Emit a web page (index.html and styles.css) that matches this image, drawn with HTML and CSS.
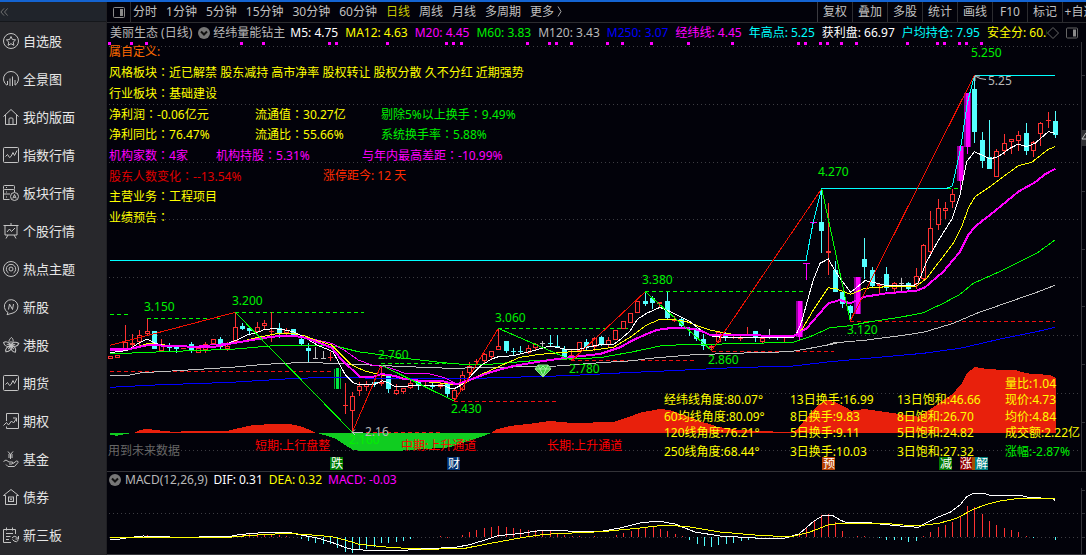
FILE: index.html
```html
<!DOCTYPE html>
<html lang="zh-CN">
<head>
<meta charset="utf-8">
<title>美丽生态 日线</title>
<link rel="stylesheet" href="styles.css">
</head>
<body>
<div class="app">
<nav class="side">
  <div class="side-head"><button class="fold" aria-label="收起"><svg viewBox="0 0 10 10"><path d="M4.500 1 1 5l3.500 4M8.500 1 5 5l3.500 4"/></svg></button></div>
  <a href="#zx"><svg viewBox="0 0 16 16"><circle cx="8" cy="8" r="7.500"/><path d="m8 3.500 1.400 3 3.200.4-2.400 2.200.7 3.200L8 10.700l-2.900 1.600.7-3.200-2.400-2.200 3.200-.4z"/></svg>自选股</a>
  <a href="#qj"><svg viewBox="0 0 16 16"><path d="M4 14.300A7.500 7.500 0 1 1 12 14.300M4.500 14v-4M7 15V7.500M9.500 15V5.500M12 14V9"/></svg>全景图</a>
  <a href="#bm"><svg viewBox="0 0 16 16"><path d="m.5 7.500 7.500-7 7.500 7M2.500 6v9.500h11V6M6 15.500V10q0-1 1-1h2q1 0 1 1v5.500"/></svg>我的版面</a>
  <a href="#zs"><svg viewBox="0 0 16 16"><rect x=".5" y=".5" width="15" height="15" rx="1"/><path d="m2.500 9.500 2-2 2 3 1.500-1 2-4 1.500 3 2.500-5"/></svg>指数行情</a>
  <a href="#bk"><svg viewBox="0 0 16 16"><rect x=".5" y=".5" width="11" height="4" rx="1"/><path d="M11.500 4.500V7M.5 4.500v10h6M.5 9h6.500M3 2.500h1M3 7h1M3 12h1"/><circle cx="11.500" cy="11.500" r="4"/><path d="m9.800 13.500 1.700-4 1.700 4M10.500 12.300h2"/></svg>板块行情</a>
  <a href="#gg"><svg viewBox="0 0 16 16"><path d="M.5 2.500h15M2 2.500v9.500h12V2.500M8 0v2.500M5 12l-2 3.500M11 12l2 3.500M4 9l2.500-3 2 2.500L12 5"/></svg>个股行情</a>
  <a href="#rd"><svg viewBox="0 0 16 16"><circle cx="8" cy="8" r="7.500"/><path d="M5.500 12a4.700 4.700 0 1 1 5 0"/><circle cx="8" cy="8" r="2"/></svg>热点主题</a>
  <a href="#xg"><svg viewBox="0 0 16 16"><path d="M5 13.500A6.800 6.800 0 1 1 10 14L4 15.700z"/><path d="M5.500 10.500 6.500 5l3 5.500L10.500 5"/></svg>新股</a>
  <a href="#gp"><svg viewBox="0 0 16 16"><g id="petal"><path d="M8 8.500C5 6 5.500 2.500 8.500.5c2.500 2 2 5-.5 8zM8 8V4"/></g><use href="#petal" transform="rotate(72 8 8.500)"/><use href="#petal" transform="rotate(144 8 8.500)"/><use href="#petal" transform="rotate(216 8 8.500)"/><use href="#petal" transform="rotate(288 8 8.500)"/></svg>港股</a>
  <a href="#qh"><svg viewBox="0 0 16 16"><rect x=".5" y=".5" width="15" height="15" rx="1"/><path d="m2.500 9.500 2-2 2 3 1.500-1 2-4 1.500 3 2.500-5"/></svg>期货</a>
  <a href="#qq"><svg viewBox="0 0 16 16"><path d="M3.500 8V.5h12v15h-12v-2M.5 12.500l3-3 2 2.500 3-4 2 2 3-4.500M10 5h3.500v3.500"/></svg>期权</a>
  <a href="#jj"><svg viewBox="0 0 16 16"><path d="m5 .5 2.500 3 2.500-3M7.500 3.500V8M5 4h5M5 6h5M.5 10.500 3 9l3 2h3.500q1 1.500-.5 2H6M10 12.500l3.500-2.500q2 0 1.500 1.500l-3.500 4H5l-2-2"/></svg>基金</a>
  <a href="#zq"><svg viewBox="0 0 16 16"><path d="m.5 6.500 7.500-6 7.500 6H13.500v9h-11v-9H.5M5 8h6M5 12.500h6M5.500 8v4.500M10.500 8v4.500M7 9.300l2 2M9 9.300l-2 2"/></svg>债券</a>
  <a href="#xs"><svg viewBox="0 0 16 16"><path d="M8 15.500H.5v-13h12V7M3.500.5v3M9.500.5v3M3 6.500h7M3 9.500h4.500M3 12.500h3M9 11q2-3 4.500-1l1.500 1.500M15.500 9v3h-3M15.500 13q-2 3-4.500 1L9.500 12.500"/></svg>新三板</a>
</nav>
<main class="main">
  <header class="bar">
    <button class="split" aria-label="侧栏"><svg viewBox="0 0 12 11"><rect x=".5" y=".5" width="11" height="10" rx="1"/><path class="solid" d="M7 2h3v7H7z"/></svg></button>
    <div class="periods">
      <button>分时</button><button>1分钟</button><button>5分钟</button><button>15分钟</button><button>30分钟</button><button>60分钟</button><button class="on">日线</button><button>周线</button><button>月线</button><button>多周期</button><button>更多 <svg class="more" viewBox="0 0 5 11"><path d="m1 .5 3 5-3 5"/></svg></button>
    </div>
    <div class="tools"><button>复权</button><button>叠加</button><button>多股</button><button>统计</button><button>画线</button><button>F10</button><button>标记</button><button>+自选</button></div>
  </header>
  <div class="quote">
    <span class="gray">美丽生态 (日线)</span>
    <button class="drop" aria-label="指标"><svg viewBox="0 0 12 12"><circle cx="6" cy="6" r="6"/><path d="m3 4.500 3 3 3-3"/></svg></button>
    <span class="gray title">经纬量能钻主</span>
    <div class="values"><span class="white">M5: 4.75</span><span class="yellow">MA12: 4.63</span><span class="magenta">M20: 4.45</span><span class="green">M60: 3.83</span><span class="gray">M120: 3.43</span><span class="blue">M250: 3.07</span><span class="magenta">经纬线: 4.45</span><span class="cyan">年高点: 5.25</span><span class="white">获利盘: 66.97</span><span class="cyan">户均持仓: 7.95</span><span class="yellow">安全分: 60.00</span></div>
    <button class="mark" aria-label="标记"><svg viewBox="0 0 12 12"><path d="m6 .5 5.500 5.500L6 11.500.5 6z"/></svg></button>
    <button class="mark side-toggle" aria-label="右栏"><svg viewBox="0 0 12 11"><rect x=".5" y=".5" width="11" height="10" rx="1"/><path class="solid" d="M7 2h3v7H7z"/></svg></button>
  </div>
  <section class="price">
    <svg id="price" class="plot" viewBox="107 42 979 429">
      <g id="price-shapes"></g>
      <path class="axis" d="M1081.500 42V471M1082 75.500h3M1082 191.500h3M1082 249.500h3M1082 306.500h3M1082 364.500h3M1082 422.500h3"/>
      <path class="axis-box" d="M1082 130h4v16h-4z"/>
      <path class="pointer" d="M1086 133l-4 6h4"/>
      <path class="pointer" d="M986 79.500l-6-1-5-2.500v5M975 76h5M363 432.500h-11l3-3M352 432l3 3"/>
      <path class="gem" d="M538 365h10l3 4-8 8-8-8z"/>
      <path class="gem-cut" d="M535 369h16M540 369l3 7 3-7-3-3zM538 365l2 4M548 365l-2 4"/>
      <g class="label green">
        <text x="144" y="311">3.150</text><text x="232" y="305">3.200</text><text x="378" y="359">2.760</text><text x="349" y="444">2.160</text><text x="451" y="413">2.430</text><text x="495" y="322">3.060</text><text x="569" y="373">2.780</text><text x="642" y="284">3.380</text><text x="708" y="364">2.860</text><text x="847" y="334">3.120</text><text x="818" y="176">4.270</text><text x="971" y="57">5.250</text>
      </g>
      <g class="label gray"><text x="365" y="436">2.16</text><text x="988" y="85">5.25</text></g>
      <g class="label red"><text x="255" y="450">短期:上行盘整</text><text x="401" y="450">中期:上升通道</text><text x="547" y="450">长期:上升通道</text></g>
      <text class="label dim" x="108" y="455">用到未来数据</text>
      <g class="label yellow">
        <text x="664" y="404">经纬线角度:80.07°</text><text x="664" y="421">60均线角度:80.09°</text><text x="664" y="437">120线角度:76.21°</text><text x="664" y="456">250线角度:68.44°</text>
        <text x="790" y="404">13日换手:16.99</text><text x="790" y="421">8日换手:9.83</text><text x="790" y="437">5日换手:9.11</text><text x="790" y="456">3日换手:10.03</text>
        <text x="897" y="404">13日饱和:46.66</text><text x="897" y="421">8日饱和:26.70</text><text x="897" y="437">5日饱和:24.82</text><text x="897" y="456">3日饱和:27.32</text>
        <text x="1005" y="388">量比:1.04</text><text x="1005" y="404">现价:4.73</text><text x="1005" y="421">均价:4.84</text><text x="1005" y="437">成交额:2.22亿</text><text class="green" x="1005" y="456">涨幅:-2.87%</text>
      </g>
      <path fill="#007a00" d="M330 457h13v13h-13zM939 457h13v13h-13z"/><path fill="#003070" d="M447 457h13v13h-13z"/><path fill="#b84000" d="M822 457h13v13h-13z"/><path fill="#a05000" d="M971 457h5v13h-5z"/><path fill="#900000" d="M960 457h12v13h-12z"/><path fill="#008080" d="M975 457h13v13h-13z"/>
      <g class="label white"><text x="331" y="468">跌</text><text x="448" y="468">财</text><text x="823" y="468">预</text><text x="940" y="468">减</text><text x="960" y="468">涨</text><text x="976" y="468">解</text></g>
    </svg>
    <div class="facts">
      <p class="orange">属自定义:</p>
      <p class="yellow">风格板块<i>：</i>近已解禁 股东减持 高市净率 股权转让 股权分散 久不分红 近期强势</p>
      <p class="yellow">行业板块<i>：</i>基础建设</p>
      <p class="yellow cols"><span>净利润<i>：</i>-0.06亿元</span><span>流通值<i>：</i>30.27亿</span><span class="green">剔除5%以上换手<i>：</i>9.49%</span></p>
      <p class="yellow cols"><span>净利同比<i>：</i>76.47%</span><span>流通比<i>：</i>55.66%</span><span class="green">系统换手率<i>：</i>5.88%</span></p>
      <p class="magenta cols holders"><span>机构家数<i>：</i>4家</span><span>机构持股<i>：</i>5.31%</span><span>与年内最高差距<i>：</i>-10.99%</span></p>
      <p class="darkred cols change"><span>股东人数变化<i>：</i>--13.54%</span><span class="limit">涨停距今: 12 天</span></p>
      <p class="yellow">主营业务<i>：</i>工程项目</p>
      <p class="yellow">业绩预告<i>：</i></p>
    </div>
  </section>
  <section class="macd">
    <div class="macd-head"><button class="drop" aria-label="指标"><svg viewBox="0 0 12 12"><circle cx="6" cy="6" r="6"/><path d="m3 4.500 3 3 3-3"/></svg></button><span class="gray">MACD(12,26,9)</span><span class="white">DIF: 0.31</span><span class="yellow">DEA: 0.32</span><span class="magenta">MACD: -0.03</span></div>
    <svg id="macd" class="plot" viewBox="107 488 979 66"><g id="macd-shapes"></g><path class="axis" d="M1081.500 488v66M1082 490.500h3M1082 513.500h3M1082 537.500h3"/></svg>
  </section>
</main>
</div>
<script src="chart.js"></script>
</body>
</html>
```
FILE: styles.css
```css
* { box-sizing: border-box; }
body { margin: 0; background: #02020a; color: #c0c0c0; font: 12px/16px "Noto Sans", "Noto Sans CJK SC", sans-serif; overflow: hidden; }
button { margin: 0; padding: 0; border: 0; background: none; color: inherit; font: inherit; white-space: nowrap; }
svg { display: block; }
p { margin: 0; }
.app { display: flex; min-height: 100vh; border-top: 2px solid #1464d2; }
.side { flex: 0 0 107px; background: #28282c; border-right: 1px solid #202024; overflow: hidden; }
.side-head { height: 20px; background: #20242b; border-bottom: 1px solid #15171b; display: flex; align-items: center; }
.fold svg { width: 9px; height: 10px; fill: none; stroke: #777; }
.side a { display: flex; align-items: center; gap: 4px; height: 38px; padding-left: 3px; color: #e6e6e6; text-decoration: none; font-size: 13px; }
.side a svg { width: 16px; height: 16px; fill: none; stroke: #c4c4c4; overflow: visible; }
.main { flex: 1; min-width: 0; display: flex; flex-direction: column; }
.bar { display: flex; height: 21px; border-bottom: 1px solid #2c2c30; align-items: stretch; overflow: hidden; }
.split { width: 24px; display: flex; align-items: center; justify-content: center; border-right: 1px solid #2c2c30; }
.split svg, .side-toggle svg { width: 12px; height: 11px; fill: none; stroke: #8a8a8a; }
svg .solid { fill: #8a8a8a; stroke: none; }
.periods { flex: 1; display: flex; gap: 9px; padding-left: 2px; min-width: 0; overflow: hidden; }
.periods .on { color: #c8c800; }
.more { display: inline-block; width: 5px; height: 11px; vertical-align: -1px; fill: none; stroke: #aaa; }
.tools { display: flex; border-left: 1px solid #3a3a40; width: 269px; overflow: hidden; }
.tools button { flex: 0 0 35px; border-right: 1px solid #2c2c30; }
.quote { display: flex; align-items: center; height: 19px; padding-left: 3px; }
.quote > span { white-space: nowrap; }
.drop svg { width: 12px; height: 12px; fill: #777; }
.drop path { fill: none; stroke: #111; stroke-width: 2; }
.quote .drop { margin: 0 3px 0 6px; }
.values { flex: 1; min-width: 0; display: flex; gap: 7px; margin-left: 5px; overflow: hidden; white-space: nowrap; }
.values span { flex: none; }
.mark svg { width: 12px; height: 12px; fill: none; stroke: #666; }
.side-toggle { margin: 0 8px 0 7px; }
.price { position: relative; border-bottom: 1px solid #333338; }
.plot { width: 100%; height: auto; overflow: hidden; }
.facts { position: absolute; top: 0; left: 2px; height: 186px; display: grid; grid-auto-rows: 1fr; align-items: center; white-space: nowrap; }
.facts i { font-family: "Noto Sans CJK TC", sans-serif; font-style: normal; font-feature-settings: "locl" 0; }
.cols { display: grid; grid-template-columns: 146px 126px auto; }
.holders { grid-template-columns: 107px 146px auto; }
.change { grid-template-columns: 214px auto; }
.macd { border-bottom: 1px solid #333338; }
.macd-head { display: flex; align-items: center; gap: 6px; height: 16px; padding-left: 2px; }
.macd-head .drop + span { margin-left: -2px; }
.gray { color: #b8b8b8; fill: #b8b8b8; }
.white { color: #fff; fill: #fff; }
.yellow { color: #ff0; fill: #ff0; }
.magenta { color: #f0f; fill: #f0f; }
.green { color: #00f000; fill: #00f000; }
.blue { color: #00f; fill: #00f; }
.cyan { color: #0ff; fill: #0ff; }
.red { fill: #f00; }
.orange { color: #ff6a00; }
.darkred { color: #e00000; }
.limit { color: #ff2a00; }
.dim { fill: #666; }
.axis, .grid { fill: none; stroke: #34343a; shape-rendering: crispEdges; }
.grid { stroke: #3c3c42; stroke-dasharray: 1 3; }
.axis-box { fill: #303034; }
.pointer { fill: none; stroke: #c0c0c0; }
.gem { fill: #3ed13e; stroke: #8fe08f; }
.gem-cut { fill: none; stroke: #a8eca8; }
.line { fill: none; shape-rendering: crispEdges; }
.crisp { shape-rendering: crispEdges; }
```
FILE: chart.js
```js
const NS = 'http://www.w3.org/2000/svg';

// Each pane stores its points in thirds of a unit from its own origin.
const pane = { A: [105, 280], B: [400, 260], C: [650, 220], D: [790, 40], E: [840, 340], F: [105, 465], P: null };

function points(data) {
  const out = [];
  let origin = null;
  for (const token of data.trim().split(/\s+/)) {
    if (token in pane) { origin = pane[token]; continue; }
    const [x, y] = token.split(',').map(Number);
    out.push(origin ? [origin[0] + x / 3, origin[1] + y / 3] : [x, y]);
  }
  return out;
}

function add(parent, name, attrs) {
  const node = document.createElementNS(NS, name);
  for (const key in attrs) node.setAttribute(key, attrs[key]);
  parent.appendChild(node);
}

const toPath = list => 'M' + list.map(p => p.map(n => n.toFixed(1)).join(' ')).join('L');
function line(parent, color, data, width = 1, dash = 'none') {
  add(parent, 'path', { class: 'line', d: toPath(points(data)), stroke: color, 'stroke-width': width, 'stroke-dasharray': dash });
}
function area(parent, color, data) {
  add(parent, 'path', { class: 'crisp', d: toPath(points(data)) + 'Z', fill: color });
}
function box(parent, color, x, y, w, h) {
  add(parent, 'rect', { class: 'crisp', x, y, width: w, height: h, fill: color });
}

const price = document.getElementById('price-shapes');
for (const y of [46, 104, 162, 219, 277, 335, 393, 450]) add(price, 'path', { class: 'grid', d: `M109 ${y + 0.5}H1081` });

const marks = [109, 131, 146, 241, 263, 329, 336, 387, 446, 453, 461, 527, 549, 556, 571, 607, 622, 651, 688, 732, 798, 805, 820, 827, 841, 856, 907, 937, 944, 959, 966, 981];
for (const x of marks) box(price, '#f0f', x - 1, 42, 3, 3);

const red = '#e8200c', green = '#10cc20';
area(price, red, 'A 88,458 105,450 127,446 150,450 200,455 300,453 370,452 400,445 440,436 500,432 555,432 590,440 620,452 632,458');
area(price, green, 'A 15,458 15,465 35,467 60,462 88,458');
area(price, green, 'A 632,458 660,466 690,475 720,495 745,510 780,514 880,514 B 0,572 60,568 150,562 200,545 250,528 275,518');
area(price, red, 'B 275,518 290,508 330,498 400,490 450,483 520,489 640,486 690,470 720,458 780,447 810,450 850,465 880,475 910,487 C 180,612 200,620 270,630 420,637 440,630 460,605 490,570 510,550 530,540 560,548 605,572 E 75,207 150,218 235,230 270,208 340,160 365,130 380,100 405,81 445,88 525,90 560,100 630,105 648,115 648,278');

const dashed = [
  ['#0f0', 'A 15,103 78,103'], ['#0f0', 'A 127,115 345,115'], ['#0f0', 'A 391,97 778,97'],
  ['#0f0', 'A 829,250 895,250'], ['#0f0', 'B 0,310 150,310'], ['#0f0', 'B 295,205 690,205'],
  ['#0f0', 'B 736,94 C 462,214'], ['#0f0', 'D 470,446 511,446'],
  ['#f01010', 'A 15,274 690,274'], ['#f01010', 'A 742,457 B 120,517'], ['#f01010', 'B 163,424 470,424'],
  ['#f01010', 'B 514,301 885,301'], ['#f01010', 'C 185,394 552,394'], ['#f01010', 'D 181,844 795,844']
];
for (const [color, data] of dashed) {
  const list = points(data).map(([x, y]) => [x, Math.floor(y) + 0.5]);
  line(price, color, 'P ' + list.map(p => p.join(',')).join(' '), 1, '4 3');
}

// type, centre, high, low, body top, body bottom
const candles = {
  A: `r16,228,236,228,236 r38,225,234,225,234 r61,135,213,187,213 r82,163,205,190,194 r103,150,198,165,185 r127,116,166,154,163
    c148,153,207,153,207 r169,177,215,195,212 c193,190,215,198,203 c214,195,220,198,206 r236,203,208,203,208 c259,187,218,192,212
    r280,203,220,203,220 r301,187,218,193,211 r325,176,192,176,192 c346,172,207,178,200 r367,187,213,197,206 r391,100,190,142,187
    c412,130,150,138,146 c433,142,165,145,152 r457,126,160,142,157 r478,120,150,130,138 r499,97,185,152,154 c523,130,175,145,160
    r544,145,170,150,160 c565,146,172,148,165 c589,168,195,177,192 c610,190,247,204,213 g631,200,235,234,235 g655,213,238,234,235
    r676,217,242,230,234 r721,310,402,375,376 r742,335,460,348,392 r764,305,348,317,332 r785,303,333,313,321 c808,300,322,307,312
    r829,255,318,305,312 c850,283,338,288,327 r873,313,345,331,342`,
  B: `r10,383,403,385,395 r31,362,387,370,385 c55,360,390,364,378 r77,365,380,376,377 c98,370,388,378,379 r120,365,388,372,380
    c142,365,412,370,402 r163,388,420,391,416 r187,333,393,346,391 r208,307,345,318,338 r230,297,312,303,306 r253,280,315,283,303
    r274,273,298,273,290 r295,205,270,259,269 c319,242,280,243,272 c340,265,288,274,275 c361,258,283,274,275 r385,255,283,264,279
    r406,248,272,251,263 g427,243,262,250,251 c451,224,258,250,251 c472,225,265,258,263 c493,258,297,267,290 r514,267,300,286,298
    r538,247,275,247,272 c559,237,270,246,262 r583,232,272,235,262 c604,228,258,230,254 r625,230,260,240,255 r647,210,240,210,240
    r670,184,207,184,207 r691,160,188,160,188 r712,124,158,124,158 c736,97,137,123,132 c757,108,147,114,130 r778,125,143,125,133
    c802,97,180,123,173 r823,167,187,180,181 c844,173,203,177,198 c868,200,228,208,209 c889,203,243,210,236 c910,222,270,236,258`,
  C: `r183,372,392,378,385 r205,335,370,337,367 c226,335,363,340,350 r250,347,358,352,353 r271,345,363,350,358 r292,320,345,343,344
    c316,333,365,334,355 r337,350,370,355,365 g358,327,357,347,348 c382,345,360,350,354 r403,345,367,352,353 r425,345,355,350,351
    m448,243,363,243,352 t469,130,180,130,131 t490,0,12,7,8`,
  D: `c95,447,640,547,572 r115,490,705,634,640 c137,663,755,691,755 c157,752,803,755,793 c181,795,840,797,820 m202,711,822,711,822
    c223,594,717,657,680 c247,680,742,690,737 r268,730,760,732,738 c289,680,752,702,745 r313,727,757,730,746 g334,713,755,730,731
    c355,725,750,729,748 r379,685,748,709,733 r400,612,722,616,718 r421,514,645,565,637 r445,477,570,505,556 r466,487,536,505,514
    r487,448,503,463,485 m511,319,450,319,422 m532,160,342,160,320 c553,110,308,147,275 c577,277,383,300,362 c598,240,386,350,386
    r619,328,410,332,410 r643,282,346,310,334 r664,297,342,298,307 r685,273,333,286,302 c709,249,346,279,332 r730,303,350,305,332
    r751,245,317,250,281 r775,216,264,240,241 c796,213,293,244,284`
};
const ink = { r: '#ff3232', c: '#54ffff', g: '#c0c0c0', m: '#f0f', t: '#f0f' };
for (const key in candles) {
  for (const item of candles[key].trim().split(/\s+/)) {
    const type = item[0], color = ink[type];
    const [cx, high, low, top, bottom] = item.slice(1).split(',').map(Number);
    const x = Math.floor(pane[key][0] + cx / 3);
    const [h, l, t, b] = [high, low, top, bottom].map(v => Math.round(pane[key][1] + v / 3));
    if (type === 'm') {
      box(price, '#90009a', x - 3, t, 7, b - t);
      box(price, color, x - 1, t, 4, b - t);
      box(price, color, x, t, 1, l - t);
      continue;
    }
    box(price, color, x, h, 1, Math.max(1, l - h));
    const half = type === 't' ? 3 : 2;
    const height = Math.max(1, b - t);
    box(price, color, x - half, t, half * 2 + 1, height);
    if (type === 'r' && height > 2) box(price, '#02020a', x - 1, t + 1, 3, height - 2);
  }
}
box(price, '#00b030', 334, 369, 1, 20);
box(price, '#00e840', 336, 368, 3, 21);
box(price, '#00b030', 340, 369, 1, 20);

line(price, '#00f', 'A 15,322 150,315 380,307 540,297 660,292 900,296 B 200,356 290,353 500,347 700,337 C 0,455 250,443 430,438 540,425 D 200,958 400,940 510,925 640,895 740,875 795,862');
line(price, '#c0c0c0', 'A 15,286 70,286 110,278 200,273 380,262 480,253 600,247 750,253 880,259 B 150,325 300,322 470,318 600,308 700,302 C 0,415 120,405 250,400 420,395 480,385 560,370 D 120,910 230,900 330,887 400,877 490,850 560,820 680,778 740,757 795,736');
line(price, '#0f0', 'A 15,222 130,217 260,212 380,208 520,196 650,197 700,200 760,215 830,225 880,233 B 60,300 130,308 200,314 280,312 400,302 480,298 600,293 700,275 780,258 860,253 C 180,373 430,367 480,350 540,323 600,317 D 240,845 330,832 400,818 460,790 510,763 550,730 640,690 700,660 740,640 795,600');
line(price, '#f0f', 'A 15,205 80,205 130,194 260,200 370,190 530,167 590,170 680,190 720,212 760,240 800,255 850,262 900,280 B 80,340 130,352 170,371');
line(price, '#ff0', 'A 15,210 80,207 130,190 190,196 300,202 350,198 400,187 460,172 520,160 560,160 600,168 630,180 680,195 700,215 740,255 780,273 830,285 880,290 B 40,362 110,368 150,372 180,375 210,362 240,345 300,318 360,292 420,283 480,278 580,270 640,262 690,232 740,195 780,178 820,178 860,185 900,200 C 180,330 215,337 260,345 430,350 455,330 490,270 535,203 D 140,747 182,763 225,745 290,740 380,738 410,715 450,662 490,610 515,560 535,505 555,470 600,440 640,410 685,377 725,367 775,328 795,320');
line(price, '#fff', 'A 15,217 45,215 70,210 100,190 127,177 150,190 180,197 240,200 345,198 370,190 395,180 425,165 455,158 480,148 510,146 540,150 565,155 590,168 612,180 640,197 665,207 685,217 705,255 720,283 745,308 765,315 810,313 832,302 850,308 870,320 885,320 B 0,380 60,375 100,378 130,375 150,385 165,385 190,372 215,345 245,315 275,297 295,290 340,287 380,277 415,268 450,258 475,263 500,269 540,267 570,260 600,254 640,254 665,235 690,213 712,178 740,160 780,142 810,155 845,172 870,185 900,208 C 180,347 215,352 430,352 440,340 455,305 470,250 490,180 510,130 535,117 D 125,675 150,715 182,757 225,722 250,727 290,737 370,737 385,728 410,665 440,610 487,535 510,465 530,365 553,335 575,345 600,357 625,350 660,325 685,312 710,320 735,310 775,275 795,280');
line(price, '#f0f', 'A 15,210 70,208 130,195 260,200 330,200 370,192 430,182 480,173 530,167 590,170 620,180 680,203 710,240 765,290 800,292 830,282 870,288 885,293 B 0,355 60,362 120,362 170,373 200,363 270,337 340,318 430,303 500,293 600,282 660,262 700,240 740,222 770,210 820,203 880,206 910,215 C 180,345 270,345 430,349 470,325 500,290 535,250 D 150,780 180,790 225,770 290,760 380,752 405,742 460,695 510,635 535,585 555,560 610,517 685,455 735,427 765,403 796,386', 2);
line(price, '#0ff', 'P 110,260.5 806,260.5 D 70,545 95,445 470,445 487,438 511,330 532,190 553,107 795,107');

const swings = [
  ['r', 'A 15,196 391,97'], ['g', 'A 391,97 742,457'], ['r', 'A 742,457 829,255'], ['g', 'A 829,255 B 163,424'],
  ['r', 'B 163,424 295,205'], ['g', 'B 295,205 514,300'], ['r', 'B 517,300 736,95'], ['g', 'B 736,95 C 185,392'],
  ['r', 'C 185,392 D 95,446'], ['g', 'D 95,446 181,843'], ['r', 'D 181,843 553,106']
];
for (const [kind, data] of swings) line(price, kind === 'r' ? '#f01000' : '#00ff00', data);

const macd = document.getElementById('macd-shapes');
for (const y of [513, 537]) add(macd, 'path', { class: 'grid', d: `M109 ${y + 0.5}H1081` });

const bars = points('F 37,219 61,219 103,213 127,210 148,214 391,213 412,210 433,207 457,206 478,206 499,207 523,211 544,214 589,221 610,228 631,234 655,237 676,236 697,249 721,261 742,263 763,256 785,251 808,246 829,235 850,234 873,231 895,228 916,221 1006,213 1027,215 1072,211 1093,202 1114,195 1138,189 1159,187 1180,183 1204,187 1225,189 1246,192 1270,195 1291,196 1312,197 1336,199 1357,204 1378,210 1402,213 1423,213 1468,213 P 616,535 623,533 631,531 638,529 645,528 653,527 660,529 667,531 675,534 682,536 689,540 697,544 704,546 711,547 718,545 726,544 733,543 741,541 748,540 755,539 799,533 806,527 814,521 821,515 828,514 835,522 E 7,573 52,589 73,587 118,595 139,600 163,600 184,600 205,606 229,603 250,588 271,576 295,561 316,555 337,545 361,528 382,498 403,502 427,522 448,543 469,555 493,565 514,570 535,576 559,588 580,595 646,600');
for (const [x, y] of bars) {
  const end = Math.round(y), up = end <= 537;
  box(macd, up ? '#ff3232' : '#54ffff', Math.floor(x), up ? end : 537, 1, Math.max(1, Math.abs(end - 537)));
}
line(macd, '#fff', 'F 15,222 45,222 70,218 115,213 180,214 200,217 370,215 400,209 470,203 555,203 600,212 640,220 680,232 720,247 745,254 800,256 900,256 930,253 1050,247 1090,240 1140,225 1180,212 1250,205 1310,196 1360,196 1400,199 1490,199 P 620,528 640,523 658,521 675,524 695,532 720,536 755,538 785,538 799,534 814,521 824,515 832,515 E 0,540 15,546 40,549 80,547 120,552 180,558 235,562 250,553 290,533 330,517 360,495 380,470 400,460 430,460 450,466 540,466 570,473 635,475 645,481');
line(macd, '#ff0', 'F 15,219 370,217 440,211 550,205 620,210 680,215 720,225 760,237 830,245 900,250 970,253 1080,250 1150,236 1250,218 1320,208 1420,203 1490,200 P 640,528 665,525 690,527 720,532 755,535 790,537 810,532 828,525 E 0,550 130,550 190,555 250,556 300,549 350,535 400,508 440,493 480,483 530,476 645,477');
```
